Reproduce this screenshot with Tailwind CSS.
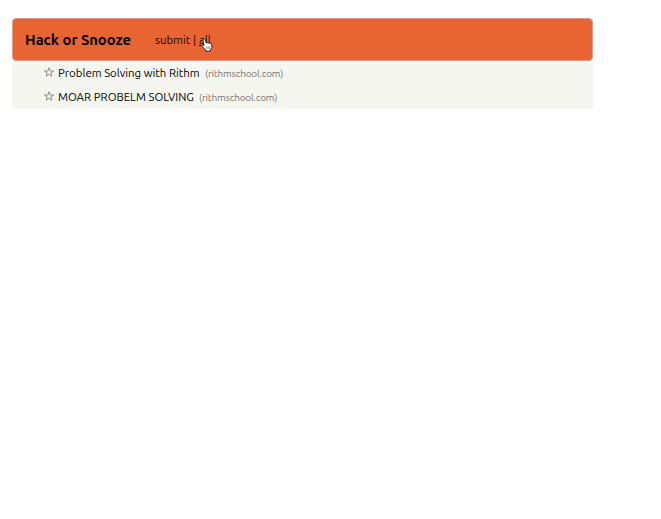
<!DOCTYPE html>
<html lang="en">
<head>
<meta charset="utf-8">
<title>Hack or Snooze</title>
<script src="https://cdn.jsdelivr.net/npm/@tailwindcss/browser@4"></script>
</head>
<body class="min-h-screen bg-white pl-3 pt-[18px] font-['Ubuntu','Noto_Sans',sans-serif] text-[11.4px] text-black">
<div class="w-[581px]">
  <nav class="flex h-[43px] items-center rounded-[4px] border border-[#e09a86] bg-[#e96433] pl-3 pt-px whitespace-nowrap text-[#120602]">
    <a class="w-[130px] text-[14.7px] font-bold text-black">Hack or Snooze</a>
    <div class="flex items-center">
      <a class="w-[38px]">submit</a>
      <span class="w-[6px]">|</span>
      <span class="relative">
        <a class="underline">all</a>
        <svg class="absolute left-[2px] top-[7px] h-[14px] w-[12px]" viewBox="0 0 12 14">
          <path d="M2.5 1.2C3.4.5 4.2 1 4.5 2l.7 3 .8-.4 1 .4 1-.3 1 .6 1.2.1.6 1.3v3.1L9.6 11.5V13H4.4v-1.2L1.6 8.9.8 7.3l.7-.7 1.6 1L2 2.2Z" fill="#fff" stroke="#24130d" stroke-width=".9" stroke-linejoin="round"/>
          <path d="M5.7 8.5v2.5M7.2 8.5v2.5M8.7 8.5v2.5" stroke="#5c463f" stroke-width=".6"/>
        </svg>
      </span>
    </div>
  </nav>
  <ol class="h-[48px] bg-[#f5f6f0] pl-8 whitespace-nowrap">
    <li class="flex h-6 items-center">
      <svg class="mr-[4px] h-[10px] w-[10px] shrink-0 -translate-y-px" viewBox="0 0 10 10"><path d="M5 .7 6.1 4H9.5L6.8 6l1 3.2L5 7.3 2.2 9.2l1-3.2L.5 4h3.4Z" fill="none" stroke="#777772" stroke-width=".8"/></svg>
      <a class="w-[147px]">Problem Solving with Rithm</a>
      <small class="text-[10px] tracking-[-0.18px] text-[#757571]">(rithmschool.com)</small>
    </li>
    <li class="flex h-6 items-center">
      <svg class="mr-[4px] h-[10px] w-[10px] shrink-0 -translate-y-px" viewBox="0 0 10 10"><path d="M5 .7 6.1 4H9.5L6.8 6l1 3.2L5 7.3 2.2 9.2l1-3.2L.5 4h3.4Z" fill="none" stroke="#777772" stroke-width=".8"/></svg>
      <a class="w-[141px]">MOAR PROBELM SOLVING</a>
      <small class="text-[10px] tracking-[-0.18px] text-[#757571]">(rithmschool.com)</small>
    </li>
  </ol>
</div>
</body>
</html>
